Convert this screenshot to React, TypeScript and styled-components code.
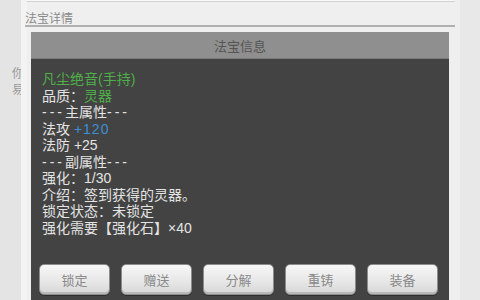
import React from "react";
import styled, { createGlobalStyle } from "styled-components";

const Global = createGlobalStyle`
  html, body { margin: 0; padding: 0; }
  body {
    width: 480px; height: 300px; overflow: hidden;
    background: #e5e5e5;
    font-family: "Noto Sans CJK SC", "Noto Sans", sans-serif;
  }
`;

const Page = styled.div`
  position: relative;
  width: 480px;
  height: 300px;
  display: flex;
  overflow: hidden;
`;

const Gutter = styled.div<{ $w: number; $bg: string }>`
  width: ${(p) => p.$w}px;
  flex: none;
  background: ${(p) => p.$bg};
  overflow: hidden;
  display: flex;
  flex-direction: column;
`;

const GhostLeft = styled.div`
  padding: 66px 0 0 12px;
  display: flex;
  flex-direction: column;
  gap: 3px;
  font-size: 12px;
  line-height: 13px;
  color: #9a9a9a;
  white-space: nowrap;
`;

const GhostRight = styled.div`
  padding: 24px 0 0 0;
  display: flex;
  flex-direction: column;
  gap: 4px;
  margin-left: -8px;
  font-size: 12px;
  line-height: 14px;
  color: #777;
  white-space: nowrap;
`;

const Dot = styled.span`
  color: #b5c24a;
`;

const Panel = styled.div`
  flex: 1;
  background: #efefef;
  border-left: 6px solid #f3f3f3;
  display: flex;
  flex-direction: column;
  padding: 0 5px 0 0;
`;

const TopCard = styled.div`
  height: 1px;
  background: #f8f8f8;
  border-bottom: 1px solid #d2d2d2;
`;

const SectionLabel = styled.div`
  margin-top: 9px;
  margin-left: -2px;
  font-size: 12px;
  line-height: 14px;
  color: #8a8a8a;
  padding-bottom: 0;
  border-bottom: 2px solid #b0b0b0;
`;

const Dialog = styled.div`
  position: absolute;
  left: 31px;
  top: 32px;
  width: 418px;
  height: 272px;
  display: flex;
  flex-direction: column;
  background: #434343;
`;

const TitleBar = styled.div`
  height: 26px;
  background: #8f8f8f;
  color: #555;
  font-size: 13px;
  line-height: 27px;
  text-align: center;
  border-bottom: 1px solid #7a7a7a;
`;

const Body = styled.div`
  padding: 12px 0 0 11px;
  display: flex;
  flex-direction: column;
  flex: 1;
`;

const Line = styled.div`
  font-family: "Liberation Sans", "Noto Sans CJK SC", sans-serif;
  font-size: 14px;
  line-height: 16.5px;
  height: 16.5px;
  color: #e4e4e4;
  white-space: nowrap;
`;

const Dashes = styled.span`
  letter-spacing: 3px;
`;

const Green = styled.span`
  color: #4fae48;
`;

const Blue = styled.span`
  color: #3b8fd4;
  letter-spacing: 1px;
`;

const Buttons = styled.div`
  margin-top: auto;
  margin-bottom: 9px;
  padding: 0 9px 0 8px;
  display: flex;
  gap: 11px;
`;

const Button = styled.button`
  width: 71px;
  height: 31px;
  border: 1px solid #8c8c8c;
  border-radius: 5px;
  background: linear-gradient(#f7f7f7, #e6e6e6 60%, #d6d6d6);
  box-shadow: inset 0 -2px 0 #b8b8b8, 0 1px 0 #2e2e2e;
  color: #8a8a8a;
  font-family: "Noto Sans CJK SC", sans-serif;
  font-size: 13px;
  padding: 0;
  cursor: pointer;
`;

const lines: React.ReactNode[] = [
  <Green key="n">凡尘绝音(手持)</Green>,
  <>品质：<Green>灵器</Green></>,
  <><Dashes>---</Dashes>主属性<Dashes>---</Dashes></>,
  <>法攻 <Blue>+120</Blue></>,
  "法防 +25",
  <><Dashes>---</Dashes>副属性<Dashes>---</Dashes></>,
  "强化：1/30",
  "介绍：签到获得的灵器。",
  "锁定状态：未锁定",
  "强化需要【强化石】×40",
];

const actions = ["锁定", "赠送", "分解", "重铸", "装备"];

export default function App() {
  return (
    <>
      <Global />
      <Page>
        <Gutter $w={21} $bg="#e4e4e4">
          <GhostLeft>
            <span>你</span>
            <span>易</span>
          </GhostLeft>
        </Gutter>
        <Panel>
          <TopCard />
          <SectionLabel>法宝详情</SectionLabel>
        </Panel>
        <Gutter $w={20} $bg="#e8e8e8">
          <GhostRight>
            <span>a</span>
            <Dot>•</Dot>
            <span>&nbsp;</span>
            <span>]</span>
          </GhostRight>
        </Gutter>
        <Dialog>
          <TitleBar>法宝信息</TitleBar>
          <Body>
            {lines.map((l, i) => (
              <Line key={i}>{l}</Line>
            ))}
          </Body>
          <Buttons>
            {actions.map((a) => (
              <Button key={a}>{a}</Button>
            ))}
          </Buttons>
        </Dialog>
      </Page>
    </>
  );
}
